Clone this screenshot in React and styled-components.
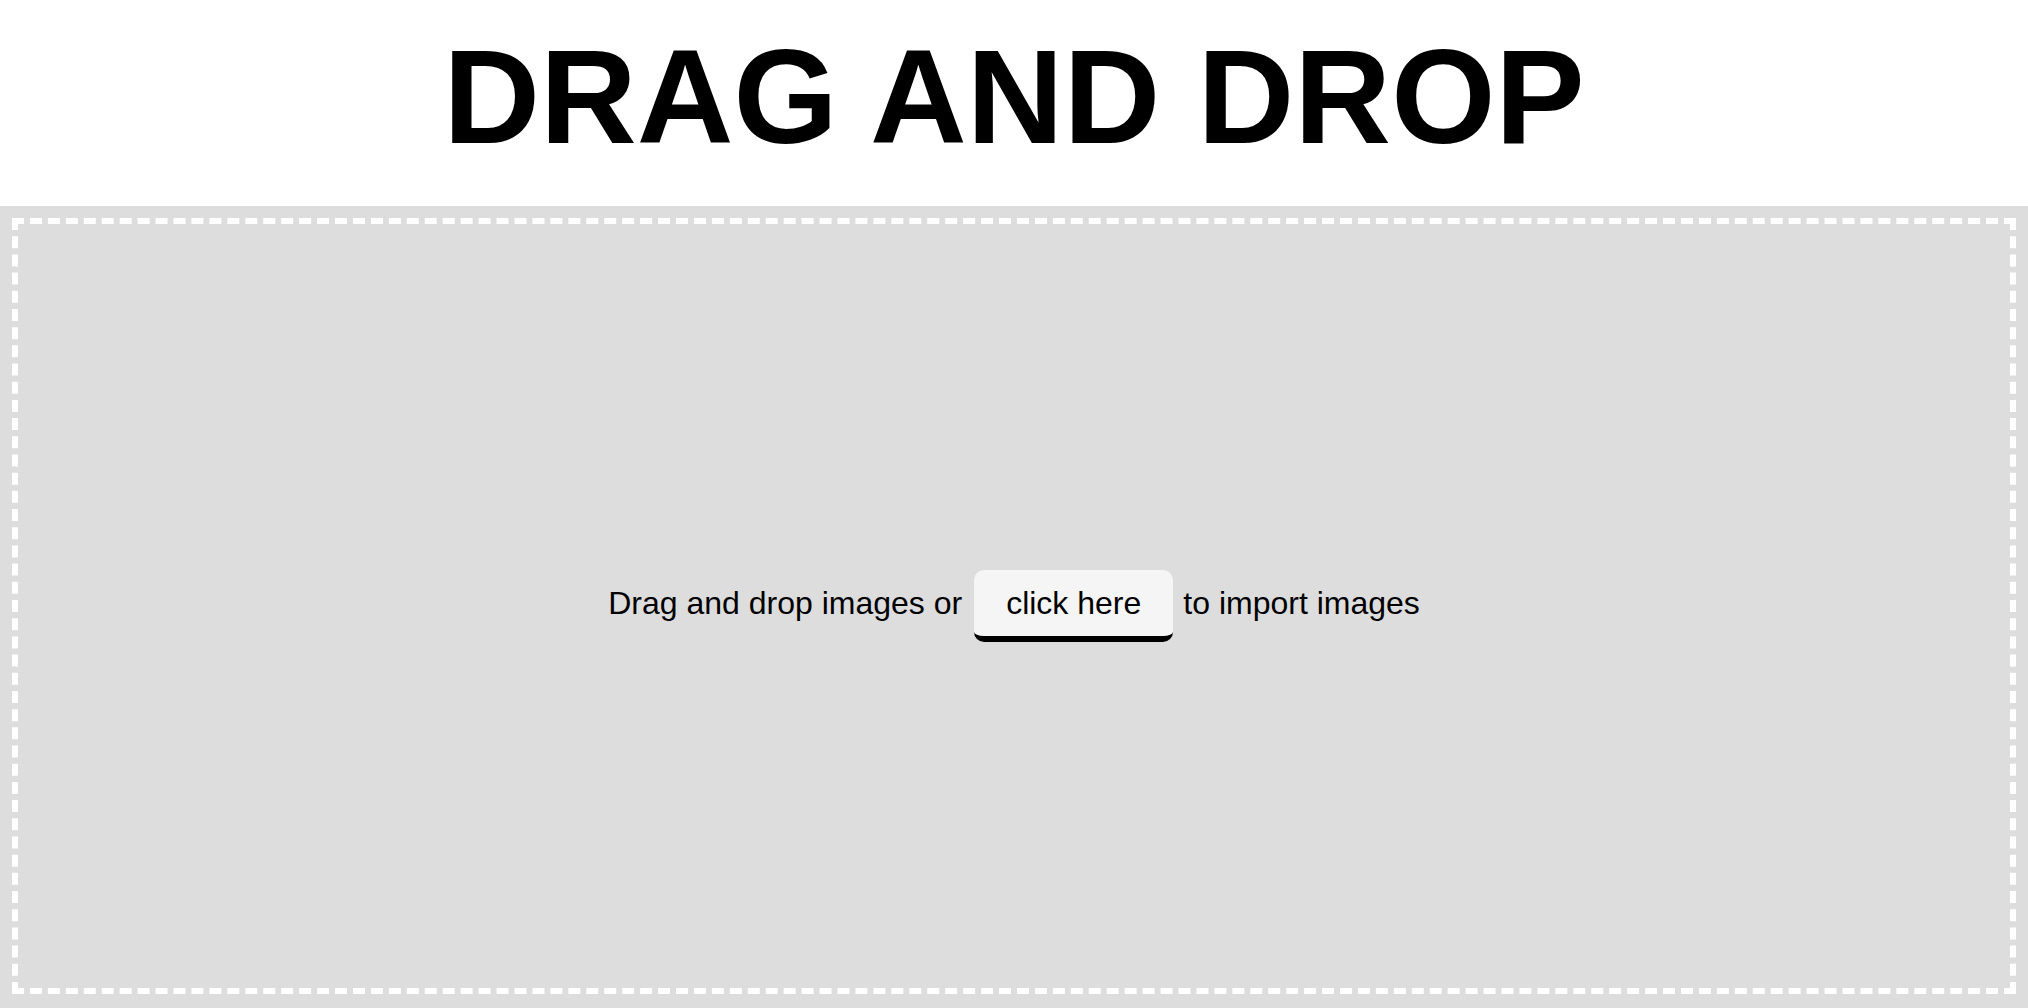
import React from "react";
import styled, { createGlobalStyle } from "styled-components";

const GlobalStyle = createGlobalStyle`
    html, body {
        margin: 0;
        padding: 0;
        background: #fff;
        font-family: "Liberation Sans", Arial, sans-serif;
        color: #000;
        overflow: hidden;
    }
`;

const App = () => {
    return (
        <>
            <GlobalStyle />
            <Header>
                <Title>DRAG AND DROP</Title>
            </Header>
            <DropArea>
                <DropZone>
                    <Row>
                        <Label>Drag and drop images or</Label>
                        <PickButton type="button">click here</PickButton>
                        <Label>to import images</Label>
                    </Row>
                </DropZone>
            </DropArea>
        </>
    );
};

export default App;

const Header = styled.header`
    height: 206px;
    box-sizing: border-box;
    padding-top: 20px;
    text-align: center;
`;

const Title = styled.h1`
    margin: 0;
    font-size: 134px;
    font-weight: 700;
    line-height: 154px;
`;

const DropArea = styled.section`
    height: 802px;
    box-sizing: border-box;
    padding: 12px 12px 14px;
    background-color: #dddddd;
`;

const DropZone = styled.div`
    height: 100%;
    box-sizing: border-box;
    border: 6px dashed #ffffff;
    display: flex;
    align-items: center;
    justify-content: center;
`;

const Row = styled.div`
    display: flex;
    align-items: baseline;
    font-size: 32px;
`;

const Label = styled.span`
    white-space: nowrap;
`;

const PickButton = styled.button`
    margin: 0 10px 0 12px;
    padding: 15px 32px 14px;
    font-family: inherit;
    font-size: 32px;
    line-height: normal;
    color: #000;
    background-color: #f5f5f5;
    border: none;
    border-bottom: 6px solid #000;
    border-radius: 10px;
    cursor: pointer;
`;
